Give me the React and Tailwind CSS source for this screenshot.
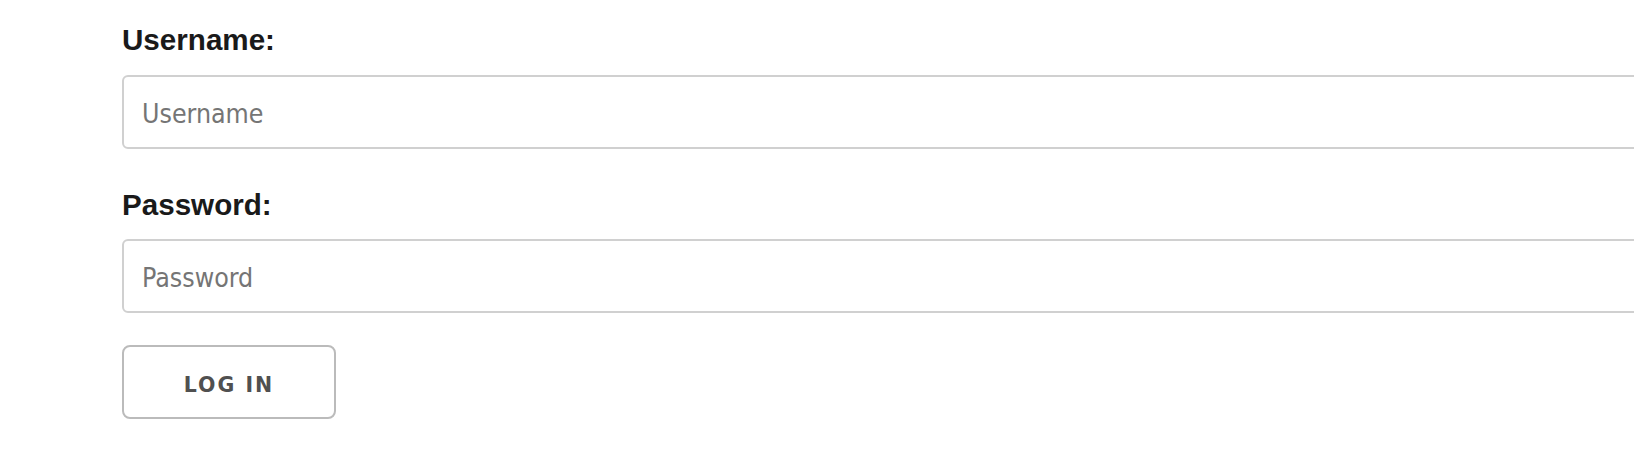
import React from "react";

const App = () => {
  return (
    <div className="w-full h-[450px] bg-white overflow-hidden">
      <form className="pl-[122px] pt-[23px] flex flex-col items-start">
        <label className="font-['Liberation_Sans',Arial,sans-serif] font-bold text-[29.6px] leading-[33px] text-[#1a1a1a]">
          Username:
        </label>
        <input
          type="text"
          placeholder="Username"
          className="mt-[19px] w-[1560px] h-[74px] border-2 border-[#d0d0d0] rounded-[6px] pl-[18px] pt-[3px] font-['DejaVu_Sans_Condensed','DejaVu_Sans',sans-serif] text-[26.5px] text-[#333] placeholder:text-[#757575] outline-none"
        />
        <label className="mt-[39px] font-['Liberation_Sans',Arial,sans-serif] font-bold text-[29.6px] leading-[33px] text-[#1a1a1a]">
          Password:
        </label>
        <input
          type="password"
          placeholder="Password"
          className="mt-[18px] w-[1560px] h-[74px] border-2 border-[#d0d0d0] rounded-[6px] pl-[18px] pt-[3px] font-['DejaVu_Sans_Condensed','DejaVu_Sans',sans-serif] text-[26.5px] text-[#333] placeholder:text-[#757575] outline-none"
        />
        <button
          type="button"
          className="mt-[32px] w-[214px] h-[74px] border-2 border-[#bbbbbb] rounded-[8px] bg-white pt-[6px] font-['DejaVu_Sans',Verdana,sans-serif] font-bold text-[20.5px] tracking-[2px] text-[#505050]"
        >
          LOG IN
        </button>
      </form>
    </div>
  );
};

export default App;
